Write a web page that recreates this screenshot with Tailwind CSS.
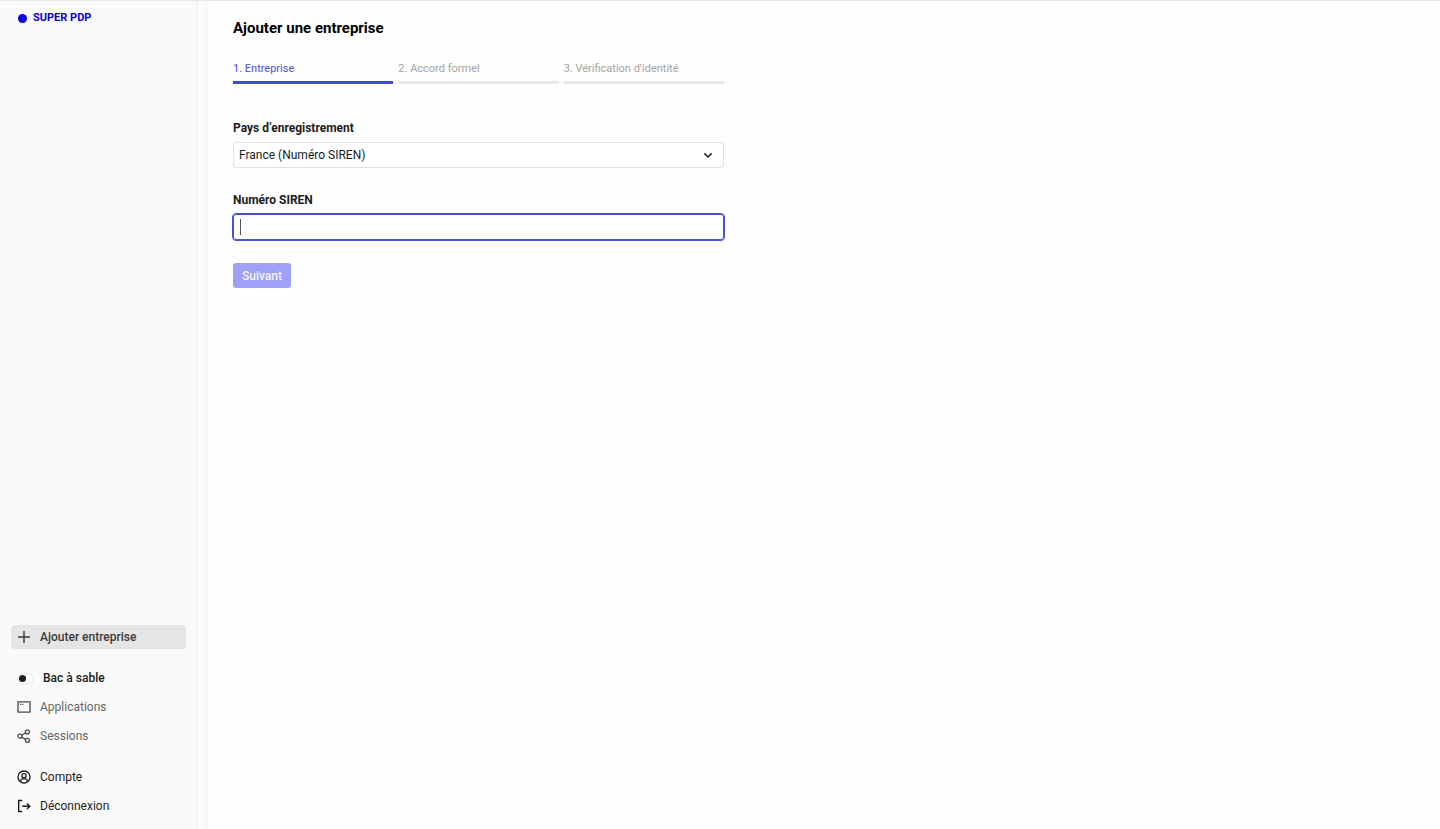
<!DOCTYPE html>
<html lang="fr">
<head>
  <meta charset="UTF-8">
  <meta name="viewport" content="width=device-width, initial-scale=1.0">
  <title>Ajouter une entreprise - SUPER PDP</title>
  <script src="https://cdn.jsdelivr.net/npm/@tailwindcss/browser@4"></script>
</head>
<body class="flex min-h-screen bg-[#fefefe] border-t border-[#e8e8e8] font-['Roboto','Liberation_Sans',sans-serif] text-xs leading-4 text-[#1c1c1c]">
  <aside class="flex flex-col justify-between w-[198px] shrink-0 bg-[#fafafa] border-r border-[#f0f0f0] px-[11px] pt-[9px] pb-[11px]">
    <a href="/" class="flex items-center gap-[6px] pl-[7px] text-[11px] leading-4 font-bold text-[#0a00d6]">
      <span class="size-[9px] rounded-full bg-[#0a00e0]"></span>
      SUPER PDP
    </a>
    <nav class="flex flex-col gap-[17px] font-medium">
      <a href="/companies/new" class="flex items-center gap-[9px] h-6 px-[6px] rounded bg-[#e5e5e5] text-[#3a3a3a]">
        <svg class="size-[14px]" viewBox="0 0 14 14" fill="none" stroke="currentColor" stroke-width="1.4"><path d="M7 1v12M1 7h12"/></svg>
        Ajouter entreprise
      </a>
      <div class="flex flex-col gap-[5px]">
        <label class="flex items-center gap-[9px] h-6 px-[6px] cursor-pointer">
          <input type="checkbox" class="peer sr-only">
          <span class="flex items-center w-[17px] h-[11px] px-px rounded-full border border-[#e2e2e2] bg-white peer-checked:justify-end">
            <span class="size-[7px] rounded-full bg-[#1c1c1c]"></span>
          </span>
          Bac à sable
        </label>
        <a href="/applications" class="flex items-center gap-[9px] h-6 px-[6px] font-normal text-[#666666]">
          <svg class="size-[14px]" viewBox="0 0 14 14" fill="none" stroke="#4a4a4a" stroke-width="1.3"><path d="M1 1.9h12v10.2H1z"/><path d="M3 4.3h1.2M5.2 4.3h1.2"/></svg>
          Applications
        </a>
        <a href="/sessions" class="flex items-center gap-[9px] h-6 px-[6px] font-normal text-[#666666]">
          <svg class="size-[14px]" viewBox="0 0 14 14" fill="none" stroke="#4a4a4a" stroke-width="1.3"><circle cx="2.9" cy="7.2" r="2"/><circle cx="10.4" cy="2.9" r="2"/><circle cx="10.4" cy="11.3" r="2"/><path d="M4.7 6.2l3.9-2.3M4.7 8.2l3.9 2.2"/></svg>
          Sessions
        </a>
      </div>
      <div class="flex flex-col gap-[5px] font-normal">
        <a href="/account" class="flex items-center gap-[9px] h-6 px-[6px]">
          <svg class="size-[14px]" viewBox="0 0 14 14" fill="none" stroke="currentColor" stroke-width="1.3"><circle cx="7" cy="7" r="6"/><circle cx="7" cy="5.7" r="2.1"/><path d="M3.9 11.7V10.6c0-1 .7-1.7 1.7-1.7h2.8c1 0 1.7.7 1.7 1.7v1.1"/></svg>
          Compte
        </a>
        <a href="/logout" class="flex items-center gap-[9px] h-6 px-[6px]">
          <svg class="size-[14px]" viewBox="0 0 14 14" fill="none" stroke="currentColor" stroke-width="1.4"><path d="M5.2 1.5H1.7v11h3.5M5.2 7.2h7.4M10 4.4l2.8 2.8L10 10"/></svg>
          Déconnexion
        </a>
      </div>
    </nav>
  </aside>
  <div class="w-[9px] shrink-0 bg-[#fbfbfb] border-r border-[#f0f0f0]"></div>
  <main class="grow px-[26px] pt-[17px]">
    <div class="max-w-[491px]">
      <h1 class="text-[15px] leading-5 font-bold text-black">Ajouter une entreprise</h1>
      <ol class="grid grid-cols-3 gap-[5px] mt-[23px] text-[11px] leading-4 text-[#a3a3a3]">
        <li class="pb-1 border-b-3 border-[#4149cc] text-[#4b50d0]">1. Entreprise</li>
        <li class="pb-1 border-b-3 border-[#e8e8e8]">2. Accord formel</li>
        <li class="pb-1 border-b-3 border-[#e8e8e8]">3. Vérification d’identité</li>
      </ol>
      <form class="flex flex-col mt-9">
        <label for="country" class="font-bold">Pays d’enregistrement</label>
        <div class="relative mt-[6px]">
          <select id="country" class="block appearance-none w-full h-[26px] px-[5px] rounded-[3px] border border-[#e0e0e0] bg-white">
            <option>France (Numéro SIREN)</option>
          </select>
          <svg class="absolute right-[11px] top-2 size-[10px] pointer-events-none" viewBox="0 0 10 10" fill="none" stroke="currentColor" stroke-width="1.5"><path d="M1.4 3.4 5 7l3.6-3.6"/></svg>
        </div>
        <label for="siren" class="mt-6 font-bold">Numéro SIREN</label>
        <div class="relative mt-[6px]">
          <input id="siren" type="text" class="block w-full h-[26px] px-[5px] rounded-[3px] border border-[#4a50d4] bg-white outline-1 outline-[#4a50d4] caret-transparent">
          <span class="absolute left-[7px] top-[5px] w-px h-4 bg-[#555555]"></span>
        </div>
        <button type="submit" class="self-start h-[25px] mt-[23px] px-[9px] rounded-[3px] bg-[#9fa1f8] font-medium text-[#f4f4ff]">Suivant</button>
      </form>
    </div>
  </main>
</body>
</html>
